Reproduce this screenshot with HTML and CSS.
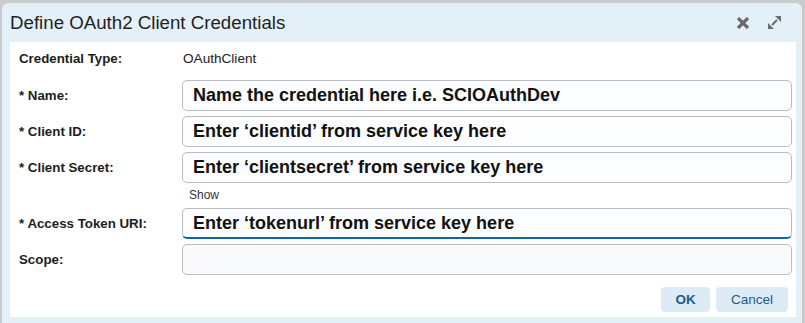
FILE: index.html
```html
<!DOCTYPE html>
<html>
<head>
<meta charset="utf-8">
<link rel="stylesheet" href="styles.css">
</head>
<body>
<div class="dialog">
  <div class="titlebar">
    <div class="title">Define OAuth2 Client Credentials</div>
    <div class="tools">
      <svg class="ico close" width="14" height="12" viewBox="0 0 14 12"><path d="M2 1 L12 11 M12 1 L2 11" stroke="#6b6b6b" stroke-width="3.2" stroke-linecap="butt"/></svg>
      <svg class="ico expand" width="15" height="15" viewBox="0 0 15 15"><path d="M5 10 L10 5" stroke="#6b6b6b" stroke-width="2"/><path d="M8 1 H14 V7 Z" fill="#6b6b6b"/><path d="M1 8 V14 H7 Z" fill="#6b6b6b"/></svg>
    </div>
  </div>
  <div class="content">
    <div class="row type-row">
      <div class="label">Credential Type:</div>
      <div class="value">OAuthClient</div>
    </div>
    <div class="row field first">
      <div class="label">* Name:</div>
      <div class="input">Name the credential here i.e. SCIOAuthDev</div>
    </div>
    <div class="row field">
      <div class="label">* Client ID:</div>
      <div class="input">Enter ‘clientid’ from service key here</div>
    </div>
    <div class="row field">
      <div class="label">* Client Secret:</div>
      <div class="input">Enter ‘clientsecret’ from service key here</div>
    </div>
    <div class="row show-row">
      <div class="label"></div>
      <div class="show">Show</div>
    </div>
    <div class="row field token">
      <div class="label">* Access Token URI:</div>
      <div class="input focused">Enter ‘tokenurl’ from service key here</div>
    </div>
    <div class="row field">
      <div class="label">Scope:</div>
      <div class="input empty"></div>
    </div>
    <div class="buttons">
      <button class="btn ok">OK</button>
      <button class="btn cancel">Cancel</button>
    </div>
  </div>
</div>
</body>
</html>
```
FILE: styles.css
```css
html, body {
  margin: 0;
  padding: 0;
}
body {
  background: #c9cbcd;
  width: 805px;
  height: 323px;
  overflow: hidden;
  padding: 3px 3px 0 2px;
  box-sizing: border-box;
  font-family: "Liberation Sans", Arial, sans-serif;
}
.dialog {
  background: #e4f0f7;
  border-radius: 6px 6px 0 0;
  height: 320px;
  padding: 0 6px 0 8px;
  box-sizing: border-box;
}
.titlebar {
  height: 39px;
  display: flex;
  align-items: center;
  justify-content: space-between;
}
.title {
  font-size: 18.7px;
  color: #1f1f1f;
  margin-top: 1px;
}
.tools {
  display: flex;
  align-items: center;
  gap: 17px;
  margin-right: 14px;
}
.ico { display: block; }
.content {
  background: #fff;
  height: 275px;
  padding: 0 4px 0 9px;
  box-sizing: border-box;
}
.row {
  display: flex;
  align-items: center;
}
.label {
  width: 163px;
  flex: none;
  font-size: 13.3px;
  font-weight: bold;
  color: #1d1d1d;
}
.type-row {
  height: 30px;
  padding-top: 1px;
}
.value {
  font-size: 13.6px;
  color: #222;
  margin-left: 1px;
}
.field { margin-top: 5px; }
.field.first { margin-top: 7px; }
.input {
  flex: 1;
  height: 31px;
  box-sizing: border-box;
  border: 1px solid #b9bec6;
  border-radius: 5px;
  background: #fcfdfe;
  font-size: 18px;
  font-weight: bold;
  color: #111;
  padding: 0 10px;
  display: flex;
  align-items: center;
}
.input.focused {
  border-bottom: 2px solid #0b64b0;
  height: 31px;
}
.input.empty { background: #f8fafc; }
.show-row { height: 25px; }
.show {
  font-size: 12px;
  color: #333;
  margin-left: 7px;
  margin-top: -1px;
}
.token { margin-top: 0; }
.buttons {
  display: flex;
  justify-content: flex-end;
  gap: 6px;
  margin-top: 12px;
  padding-right: 4px;
}
.btn {
  border: none;
  border-radius: 4px;
  background: #dcebf5;
  color: #1a5d8c;
  font-family: "Liberation Sans", Arial, sans-serif;
  font-size: 13.5px;
  height: 25px;
  padding: 0;
}
.btn.ok { width: 49px; font-weight: bold; }
.btn.cancel { width: 72px; }
```
